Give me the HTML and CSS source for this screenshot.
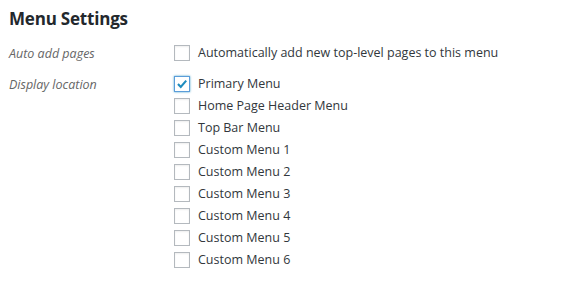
FILE: index.html
```html
<!DOCTYPE html>
<html lang="en">
<head>
    <meta charset="UTF-8">
    <meta name="viewport" content="width=device-width, initial-scale=1.0">
    <title>Menu Settings</title>
    <link rel="stylesheet" href="styles.css">
</head>
<body>
    <div class="menu-settings">
        <h3>Menu Settings</h3>
        <div class="setting-row auto-add">
            <div class="setting-label">Auto add pages</div>
            <div class="setting-input">
                <label class="check"><span class="box"></span>Automatically add new top-level pages to this menu</label>
            </div>
        </div>
        <div class="setting-row">
            <div class="setting-label">Display location</div>
            <div class="setting-input locations">
                <label class="check"><span class="box checked"><svg viewBox="0 0 16 16" width="16" height="16"><path d="M3.4 8 L6.6 11.4 L12.8 4.2" fill="none" stroke="#1e8cbe" stroke-width="2.4"/></svg></span>Primary Menu</label>
                <label class="check"><span class="box"></span>Home Page Header Menu</label>
                <label class="check"><span class="box"></span>Top Bar Menu</label>
                <label class="check"><span class="box"></span>Custom Menu 1</label>
                <label class="check"><span class="box"></span>Custom Menu 2</label>
                <label class="check"><span class="box"></span>Custom Menu 3</label>
                <label class="check"><span class="box"></span>Custom Menu 4</label>
                <label class="check"><span class="box"></span>Custom Menu 5</label>
                <label class="check"><span class="box"></span>Custom Menu 6</label>
            </div>
        </div>
    </div>
</body>
</html>
```

FILE: styles.css
```css
body {
    margin: 0;
    background: #fff;
    font-family: "Open Sans", sans-serif;
    font-size: 12.5px;
    color: #32373c;
}
.menu-settings {
    padding: 7px 9px;
}
h3 {
    margin: 0 0 14px 0;
    font-size: 17px;
    font-weight: 700;
    color: #23282d;
    line-height: 24px;
    letter-spacing: -0.2px;
}
.setting-row {
    display: grid;
    grid-template-columns: 165px 1fr;
}
.auto-add {
    margin-bottom: 13px;
}
.setting-label {
    font-style: italic;
    color: #666;
    line-height: 18px;
}
.locations {
    display: flex;
    flex-direction: column;
    gap: 6px;
}
.check {
    display: flex;
    align-items: center;
    gap: 8px;
    line-height: 16px;
}
.box {
    width: 14px;
    height: 14px;
    border: 1px solid #b4b9be;
    background: #fff;
    display: inline-flex;
    align-items: center;
    justify-content: center;
    box-shadow: inset 0 1px 2px rgba(0, 0, 0, 0.07);
}
.box svg {
    display: block;
}
.box.checked {
    border-color: #5b9dd9;
    box-shadow: 0 0 2px rgba(30, 140, 190, 0.8);
}
```
